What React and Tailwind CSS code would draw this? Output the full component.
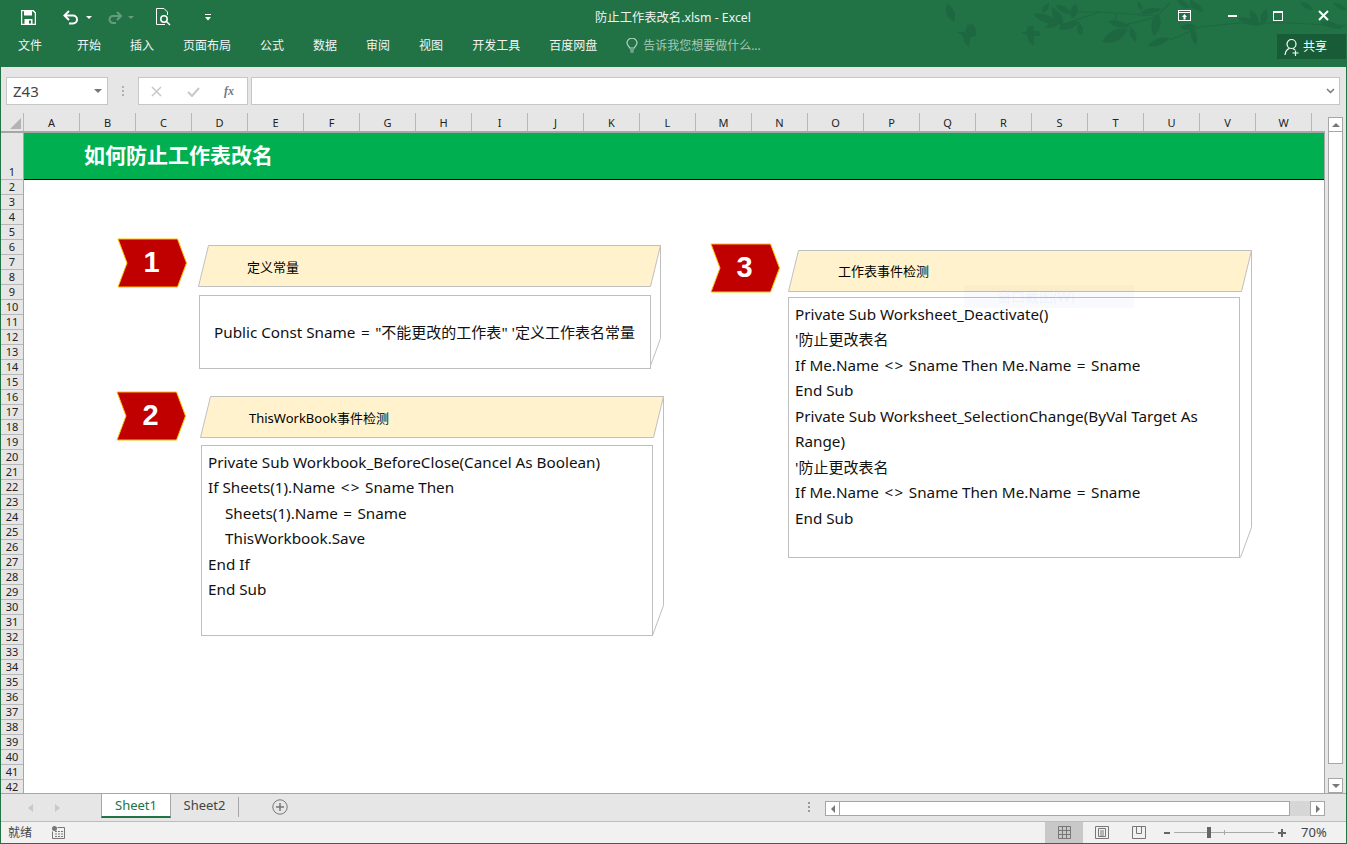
import React from 'react';

const ui = { fontFamily: '"Noto Sans", "Noto Sans CJK SC", sans-serif' };
const cols = 'ABCDEFGHIJKLMNOPQRSTUVW'.split('');
const rows = Array.from({ length: 41 }, (_, i) => i + 2);
const tabs = ['文件', '开始', '插入', '页面布局', '公式', '数据', '审阅', '视图', '开发工具', '百度网盘'];

// leaf between two points, bulging by w on both sides
const leafPath = ([x1, y1, x2, y2, w]) => {
  const mx = (x1 + x2) / 2, my = (y1 + y2) / 2;
  const dx = x2 - x1, dy = y2 - y1, len = Math.hypot(dx, dy);
  const nx = (-dy / len) * w, ny = (dx / len) * w;
  return `M${x1} ${y1} Q${mx + nx} ${my + ny} ${x2} ${y2} Q${mx - nx} ${my - ny} ${x1} ${y1}Z`;
};

// page coordinates, the svg sits at x=0
const leaves = [
  [947, 4, 954, 22, 8], [1033, 14, 1058, 23, 8], [1052, 7, 1063, 27, 8], [1055, 5, 1072, 14, 6], [1076, 3, 1072, 19, 7],
  [1042, 13, 1049, 3, 5], [1058, 29, 1080, 22, 7], [1045, 28, 1062, 20, 6], [1079, 23, 1081, 36, 6],
  [1102, 42, 1128, 29, 11], [1108, 21, 1130, 27, 6], [1130, 27, 1136, 42, 6], [1140, 13, 1162, 9, 6], [1158, 13, 1154, 36, 9],
  [1147, 46, 1170, 38, 7], [1138, 2, 1142, 10, 4], [1192, 28, 1196, 45, 6], [1177, 0, 1190, 8, 5], [1190, 0, 1197, 10, 6],
  [1180, 28, 1197, 26, 6], [1193, 2, 1203, 12, 5], [1237, 18, 1262, 25, 6], [1250, 10, 1258, 25, 7], [1262, 25, 1266, 9, 7],
  [1300, 2, 1313, 10, 5], [1320, 22, 1343, 28, 6], [1333, 3, 1347, 10, 5],
];

const TitleArt = () => (
  <svg className="absolute left-0 top-0 pointer-events-none" width="1347" height="67" viewBox="0 0 1347 67">
    <g fill="none" stroke="#1d6841" strokeWidth="1.2">
      <path d="M1075 12 L1100 12 L1157 16 L1170 3" />
      <path d="M1062 25 L1084 17 L1100 12" />
      <path d="M1117 27 L1157 17" />
      <path d="M1117 14 L1113 26" />
      <path d="M1170 40 L1200 27 L1240 23 L1290 23 L1347 26" />
    </g>
    <g fill="#1d6841">
      {leaves.map((l, i) => <path key={i} d={leafPath(l)} />)}
      <path d="M957 32 L965 32 L967 25 L973 24 L976 30 L976 36 L970 37 L969 47 L964 42 L963 36 Z" />
      <path d="M1021 32 L1026 32 L1028 26 L1033 26 L1034 31 L1040 31 L1040 36 L1034 36 L1034 46 L1029 42 L1027 35 Z" />
    </g>
  </svg>
);

const Chevron = ({ n, className }) => (
  <div className={`absolute w-[70px] h-[50px] ${className}`}>
    <svg className="absolute inset-0" width="70" height="50" viewBox="0 0 70 50">
      <path d="M1 1 H60.5 L69.5 25 L60.5 49 H1 L10 25 Z" fill="#c00000" stroke="#ffc000" strokeWidth="1" />
    </svg>
    <span className="absolute inset-0 flex items-center justify-center pb-[2px] pr-[1px] text-white text-[29px] font-bold leading-none" style={{ fontFamily: '"Liberation Sans", sans-serif' }}>{n}</span>
  </div>
);

// cube shape: top face cream, front white, side face outlined
const Cube = ({ className, w, h, top, children, label, labelClass, frontClass }) => (
  <div className={`absolute ${className}`} style={{ width: w, height: h }}>
    <svg className="absolute inset-0" width={w} height={h} viewBox={`0 0 ${w} ${h}`}>
      <path d={`M0.5 ${top} L10.5 0.5 H${w - 1.5} L${w - 11.5} ${top} Z`} fill="#fff2cc" stroke="#bfbfbf" />
      <path d={`M${w - 1.5} 0.5 V${h - 30.5} L${w - 12.5} ${h - 0.5}`} fill="none" stroke="#bfbfbf" />
    </svg>
    <span className={`absolute text-[13px] leading-none text-black ${labelClass}`}>{label}</span>
    <div className={`absolute border border-[#bfbfbf] bg-white text-[15.25px] text-[#111] leading-[25.5px] ${frontClass}`}>{children}</div>
  </div>
);

// operators sit wider in the original's font
const Ne = () => <span className="tracking-[1.5px] pl-[1.5px]">&lt;&gt;</span>;
const Eq = () => <span className="px-[1.5px]">=</span>;
const Zh = ({ children }) => <span className="text-[15px]">{children}</span>;

export default function App() {
  return (
    <div className="w-[1347px] h-[844px] overflow-hidden flex flex-col bg-[#e6e6e6] border-x border-[#217346] select-none" style={ui}>
      {/* title and ribbon tabs */}
      <div className="relative h-[67px] -mx-px shrink-0 bg-[#217346] text-white">
        <TitleArt />
        <div className="relative h-[34px] flex items-center">
          <svg className="ml-[21px]" width="15" height="15" viewBox="0 0 15 15"><path d="M0.5 0.5H12L14.5 3V14.5H0.5Z" fill="none" stroke="#fff" strokeWidth="1.5" /><rect x="3" y="1" width="8" height="4.5" fill="#fff" /><rect x="3.5" y="9" width="8" height="5" fill="#fff" /><rect x="8" y="10.5" width="2" height="3" fill="#217346" /></svg>
          <svg className="ml-[27px]" width="16" height="15" viewBox="0 0 16 15"><path d="M1.5 5.5H10A4 4 0 0 1 10 13.5H6" fill="none" stroke="#fff" strokeWidth="2" /><path d="M6 1L1.5 5.5L6 10" fill="none" stroke="#fff" strokeWidth="2" /></svg>
          <svg className="ml-[7px]" width="6" height="3" viewBox="0 0 6 3"><path d="M0 0H6L3 3Z" fill="#fff" /></svg>
          <svg className="ml-[15px] opacity-30" width="15" height="13" viewBox="0 0 15 13"><path d="M14 5H6A3.5 3.5 0 0 0 6 12H9" fill="none" stroke="#fff" strokeWidth="2" /><path d="M10 1L14 5L10 9" fill="none" stroke="#fff" strokeWidth="2" /></svg>
          <svg className="ml-[6px] opacity-30" width="6" height="3" viewBox="0 0 6 3"><path d="M0 0H6L3 3Z" fill="#fff" /></svg>
          <svg className="ml-[22px]" width="15" height="18" viewBox="0 0 15 18"><path d="M9 16.5H0.5V0.5H8L11.5 4V7" fill="none" stroke="#fff" /><circle cx="8" cy="11" r="3.2" fill="none" stroke="#fff" strokeWidth="1.5" /><path d="M10.5 13.5L14 17" stroke="#fff" strokeWidth="1.5" /></svg>
          <svg className="ml-[34px]" width="6" height="8" viewBox="0 0 6 8"><rect x="0" y="1" width="6" height="1" fill="#fff" /><path d="M0 4H6L3 7.5Z" fill="#fff" /></svg>
        </div>
        <span className="absolute left-0 right-[1px] top-[10px] text-center text-[12.3px] leading-[16px] text-[#f2f2f2] whitespace-nowrap">防止工作表改名.xlsm - Excel</span>
        <div className="absolute right-0 top-[10px] flex items-center text-white">
          <svg className="mr-[37px]" width="13" height="11" viewBox="0 0 13 11"><rect x="0.5" y="0.5" width="12" height="10" fill="none" stroke="#fff" /><path d="M0 2.5H13" stroke="#fff" /><path d="M6.5 4L9 7H7.5V9.5H5.5V7H4Z" fill="#fff" /></svg>
          <div className="mr-[36px] w-[9px] h-[2px] bg-white" />
          <div className="mr-[35px] w-[10px] h-[10px] border border-white border-t-[2px]" />
          <svg className="mr-[18px]" width="11" height="11" viewBox="0 0 11 11"><path d="M1 1L10 10M10 1L1 10" stroke="#fff" strokeWidth="2" /></svg>
        </div>
        <div className="relative h-[23px] flex items-center text-[12px] text-[#f4f4f4] pl-[18px]">
          {tabs.map((t, i) => <span key={t} className={i === 1 ? 'ml-[35px]' : i === 0 ? '' : 'ml-[29px]'}>{t}</span>)}
          <svg className="ml-[29px]" width="12" height="15" viewBox="0 0 12 15"><path d="M3.5 10C3.5 8 1 7.5 1 5A5 4.8 0 0 1 11 5C11 7.5 8.5 8 8.5 10Z" fill="none" stroke="#b9d3c5" strokeWidth="1.2" /><path d="M4 12H8M4.5 14H7.5" stroke="#b9d3c5" strokeWidth="1.2" /></svg>
          <span className="ml-[5px] text-[#a9c9b8] text-[12px] whitespace-nowrap">告诉我您想要做什么...</span>
        </div>
        <div className="absolute left-[1277px] top-[34px] w-[69px] h-[25px] bg-[#185c37] flex items-center text-[12px]">
          <svg className="ml-[7px]" width="16" height="18" viewBox="0 0 16 18"><circle cx="7.5" cy="6" r="4.5" fill="none" stroke="#fff" strokeWidth="1.2" /><path d="M1 17C1.5 13 3.5 11 5.5 10.4M9 10.6C10 11 10.6 11.4 11 12M11.5 12.5V18M8.5 15H14.5" fill="none" stroke="#fff" strokeWidth="1.2" /></svg>
          <span className="ml-[3px]">共享</span>
        </div>
      </div>

      {/* formula bar */}
      <div className="h-[46px] shrink-0 flex pt-[10px] pl-[5px] pr-[6px]">
        <div className="w-[102px] h-[28px] border border-[#c6c6c6] bg-white flex items-center justify-between pl-[6px] pr-[5px] text-[15px] text-[#444]">
          <span>Z43</span>
          <svg width="8" height="4" viewBox="0 0 8 4"><path d="M0 0H8L4 4Z" fill="#777" /></svg>
        </div>
        <div className="w-[30px] h-[28px] flex flex-col items-center justify-center gap-[2px]">
          <div className="w-[2px] h-[2px] bg-[#b0b0b0]" /><div className="w-[2px] h-[2px] bg-[#b0b0b0]" /><div className="w-[2px] h-[2px] bg-[#b0b0b0]" />
        </div>
        <div className="w-[110px] h-[28px] border border-[#c6c6c6] bg-white flex items-center text-[#c4c4c4]">
          <svg className="ml-[12px]" width="11" height="11" viewBox="0 0 11 11"><path d="M1 1L10 10M10 1L1 10" stroke="#c8c8c8" strokeWidth="1.5" /></svg>
          <svg className="ml-[25px]" width="13" height="11" viewBox="0 0 13 11"><path d="M1 6L5 10L12 2" fill="none" stroke="#c8c8c8" strokeWidth="2" /></svg>
          <span className="ml-[24px] text-[12px] italic font-bold text-[#777]" style={{ fontFamily: '"Liberation Serif", serif' }}>fx</span>
        </div>
        <div className="ml-[3px] flex-1 h-[28px] border border-[#c6c6c6] bg-white flex items-center justify-end pr-[4px]">
          <svg width="9" height="6" viewBox="0 0 9 6"><path d="M1 1L4.5 4.5L8 1" fill="none" stroke="#777" strokeWidth="1.5" /></svg>
        </div>
      </div>

      {/* sheet */}
      <div className="flex-1 min-h-0 flex">
        <div className="flex-1 flex flex-col min-w-0">
          <div className="h-[18px] shrink-0 flex border-b-2 border-[#a6a6a6] box-content">
            <div className="w-[23px] shrink-0 border-r border-[#b8b8b8] flex items-end justify-end pr-[2px] pb-[2px]">
              <svg width="11" height="11" viewBox="0 0 11 11"><path d="M11 0V11H0Z" fill="#b3b3b3" /></svg>
            </div>
            {cols.map(c => (
              <div key={c} className="w-[56px] shrink-0 border-r border-[#b8b8b8] text-center text-[11px] leading-[19px] text-[#222]">{c}</div>
            ))}
          </div>
          <div className="flex-1 flex min-h-0 overflow-hidden">
            <div className="w-[23px] shrink-0 border-r border-[#a6a6a6]">
              <div className="h-[47px] border-b border-[#b8b8b8] flex items-end justify-center text-[11px] leading-[14px] text-[#222]">1</div>
              {rows.map(r => (
                <div key={r} className="h-[15px] border-b border-[#b8b8b8] text-center text-[11px] leading-[14px] text-[#222]">{r}</div>
              ))}
            </div>
            <div className="relative flex-1 bg-white overflow-hidden border-r border-[#a6a6a6]">
              <div className="h-[47px] bg-[#00b050] border-b border-black pl-[60px] pt-[7px] text-[21px] leading-[28px] font-bold text-white whitespace-nowrap" style={{ fontFamily: '"Noto Sans CJK SC", sans-serif' }}>如何防止工作表改名</div>

              <Chevron n="1" className="left-[93px] top-[105px]" />
              <Chevron n="2" className="left-[92px] top-[258px]" />
              <Chevron n="3" className="left-[686px] top-[110px]" />

              <Cube className="left-[174px] top-[112px]" w={464} h={124} top={41.5} label="定义常量" labelClass="left-[49px] top-[16px]" frontClass="left-[1px] top-[50px] w-[452px] h-[74px] flex items-center pl-[14px] pt-[2px]">
                <span className="whitespace-nowrap">Public Const Sname <Eq /> "<Zh>不能更改的工作表</Zh>" '<Zh>定义工作表名常量</Zh></span>
              </Cube>
              <Cube className="left-[176px] top-[263px]" w={465} h={240} top={41.5} label="ThisWorkBook事件检测" labelClass="left-[49px] top-[16px]" frontClass="left-[1px] top-[49px] w-[452px] h-[191px] pl-[6px] pt-[3.5px]">
                <div>Private Sub Workbook_BeforeClose(Cancel As Boolean)</div>
                <div>If Sheets(1).Name <Ne /> Sname Then</div>
                <div className="pl-[17px]">Sheets(1).Name <Eq /> Sname</div>
                <div className="pl-[17px]">ThisWorkbook.Save</div>
                <div>End If</div>
                <div>End Sub</div>
              </Cube>
              <Cube className="left-[764px] top-[117px]" w={465} h={308} top={41.5} label="工作表事件检测" labelClass="left-[50px] top-[15px]" frontClass="left-[0px] top-[47px] w-[452px] h-[261px] pl-[6px] pt-[3.5px] pr-[30px]">
                <div>Private Sub Worksheet_Deactivate()</div>
                <div>'<Zh>防止更改表名</Zh></div>
                <div>If Me.Name <Ne /> Sname Then Me.Name <Eq /> Sname</div>
                <div>End Sub</div>
                <div>Private Sub Worksheet_SelectionChange(ByVal Target As Range)</div>
                <div>'<Zh>防止更改表名</Zh></div>
                <div>If Me.Name <Ne /> Sname Then Me.Name <Eq /> Sname</div>
                <div>End Sub</div>
              </Cube>
              {/* faint leftover tooltip over the third shape */}
              <div className="absolute left-[940px] top-[152px] w-[170px] h-[23px] bg-[#3b6fd0]/[0.03] pl-[33px] text-[14px] leading-[23px] text-[#3b6fd0]/[0.07] whitespace-nowrap">窗口截图(W)</div>
            </div>
          </div>
        </div>
        {/* vertical scrollbar */}
        <div className="w-[21px] shrink-0 pl-[3px] pr-[3px] pt-[4px] flex flex-col">
          <div className="h-[15px] shrink-0 border border-[#a6a6a6] bg-white flex items-center justify-center">
            <svg width="8" height="4" viewBox="0 0 8 4"><path d="M0 4H8L4 0Z" fill="#777" /></svg>
          </div>
          <div className="h-[632px] shrink-0 border border-t-0 border-[#a6a6a6] bg-white" />
          <div className="flex-1" />
          <div className="h-[15px] shrink-0 border border-[#a6a6a6] bg-white flex items-center justify-center">
            <svg width="8" height="4" viewBox="0 0 8 4"><path d="M0 0H8L4 4Z" fill="#777" /></svg>
          </div>
        </div>
      </div>

      {/* sheet tabs */}
      <div className="h-[28px] shrink-0 flex items-start border-t border-[#a6a6a6] text-[13px]">
        <div className="w-[100px] h-full flex items-center pl-[27px] gap-[22px]">
          <svg width="5" height="8" viewBox="0 0 5 8"><path d="M5 0V8L0 4Z" fill="#c8c8c8" /></svg>
          <svg width="5" height="8" viewBox="0 0 5 8"><path d="M0 0V8L5 4Z" fill="#c8c8c8" /></svg>
        </div>
        <div className="-mt-px h-[25px] w-[70px] bg-white border-x border-t border-[#a6a6a6] border-b-2 border-b-[#217346] text-center leading-[22px] text-[#217346]">Sheet1</div>
        <div className="w-[67px] text-center leading-[22px] text-[#444]">Sheet2</div>
        <div className="w-px h-[20px] mt-[3px] bg-[#a6a6a6]" />
        <svg className="ml-[33px] mt-[5px]" width="16" height="16" viewBox="0 0 16 16"><circle cx="8" cy="8" r="7.2" fill="none" stroke="#777" /><path d="M8 4V12M4 8H12" stroke="#777" strokeWidth="1.5" /></svg>
        <div className="ml-[520px] mt-[8px] flex flex-col gap-[2px]">
          <div className="w-[2px] h-[2px] bg-[#999]" /><div className="w-[2px] h-[2px] bg-[#999]" /><div className="w-[2px] h-[2px] bg-[#999]" />
        </div>
        <div className="ml-[15px] mt-[7px] w-[500px] h-[15px] flex">
          <div className="w-[15px] border border-[#a6a6a6] bg-white flex items-center justify-center"><svg width="4" height="8" viewBox="0 0 4 8"><path d="M4 0V8L0 4Z" fill="#777" /></svg></div>
          <div className="w-[450px] border-y border-r border-[#a6a6a6] bg-white" />
          <div className="flex-1 bg-[#d6d6d6]" />
          <div className="w-[15px] border border-[#a6a6a6] bg-white flex items-center justify-center"><svg width="4" height="8" viewBox="0 0 4 8"><path d="M0 0V8L4 4Z" fill="#777" /></svg></div>
        </div>
      </div>

      {/* status bar */}
      <div className="h-[23px] shrink-0 flex items-center bg-[#f1f1f1] border-t border-[#bdbdbd] border-b border-b-[#217346] text-[12px] text-[#444]">
        <span className="ml-[7px]">就绪</span>
        <svg className="ml-[20px]" width="13" height="13" viewBox="0 0 13 13"><circle cx="2.5" cy="2.5" r="2.5" fill="#777" /><path d="M5.5 1.5H12.5V12.5H0.5V5.5" fill="none" stroke="#777" /><path d="M3 5.5H12M3 8H12M3 10.5H12" stroke="#777" strokeDasharray="2 1" /></svg>
        <div className="ml-[980px] w-[38px] h-full bg-[#c8c8c8] flex items-center justify-center">
          <svg width="13" height="13" viewBox="0 0 13 13"><path d="M0.5 0.5H12.5V12.5H0.5ZM0.5 4.5H12.5M0.5 8.5H12.5M4.5 0.5V12.5M8.5 0.5V12.5" fill="none" stroke="#777" /></svg>
        </div>
        <svg className="ml-[12px]" width="14" height="13" viewBox="0 0 14 13"><path d="M0.5 0.5H13.5V12.5H0.5ZM3.5 2.5H10.5V10.5H3.5ZM5 5H9M5 7H9M5 9H9" fill="none" stroke="#777" /></svg>
        <svg className="ml-[23px]" width="14" height="13" viewBox="0 0 14 13"><path d="M0.5 0.5H13.5V12.5H0.5ZM4.5 0.5V7.5H9.5V0.5" fill="none" stroke="#777" /></svg>
        <div className="ml-[18px] w-[6px] h-[2px] bg-[#666]" />
        <div className="relative ml-[4px] w-[100px] h-px bg-[#aaa]">
          <div className="absolute left-[33px] -top-[5px] w-[4px] h-[11px] bg-[#666]" />
          <div className="absolute left-[50px] -top-[2px] w-px h-[5px] bg-[#aaa]" />
        </div>
        <svg className="ml-[4px]" width="8" height="8" viewBox="0 0 8 8"><path d="M4 0V8M0 4H8" stroke="#666" strokeWidth="2" /></svg>
        <span className="ml-[15px] text-[13px]">70%</span>
      </div>
    </div>
  );
}
